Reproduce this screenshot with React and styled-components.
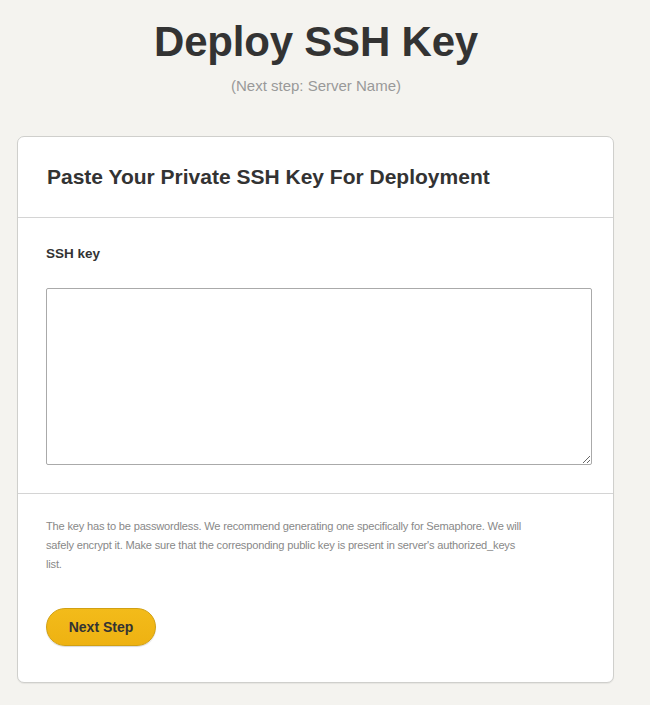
import React from "react";
import styled, { createGlobalStyle } from "styled-components";

const Global = createGlobalStyle`
  html, body { margin: 0; padding: 0; }
  body {
    background: #f4f3ef;
    font-family: "Liberation Sans", Arial, Helvetica, sans-serif;
    color: #333;
  }
`;

const Page = styled.div`
  width: 650px;
  padding: 18px 0 22px;
  box-sizing: border-box;
`;

const Header = styled.header`
  display: flex;
  flex-direction: column;
  align-items: center;
  width: 632px;
`;

const Title = styled.h1`
  margin: 0;
  font-size: 42px;
  line-height: 48px;
  font-weight: 700;
  color: #333;
  letter-spacing: -0.2px;
`;

const Subtitle = styled.p`
  margin: 11px 0 0;
  font-size: 15px;
  line-height: 18px;
  color: #999;
`;

const Card = styled.section`
  margin: 41px 0 0 17px;
  width: 597px;
  box-sizing: border-box;
  background: #fff;
  border: 1px solid #cfcfcc;
  border-radius: 7px;
  box-shadow: 0 1px 1px rgba(0, 0, 0, 0.06);
`;

const CardHead = styled.div`
  padding: 28px 29px 28px;
  border-bottom: 1px solid #d4d4d4;
`;

const CardTitle = styled.h2`
  margin: 0;
  font-size: 21px;
  line-height: 24px;
  font-weight: 700;
  color: #333;
`;

const Section = styled.div`
  padding: ${(p) => p.$pad};
  border-bottom: ${(p) => (p.$divider ? "1px solid #d4d4d4" : "none")};
`;

const Label = styled.label`
  display: block;
  font-size: 13.5px;
  line-height: 16px;
  font-weight: 700;
  color: #333;
  margin-bottom: 26px;
`;

const TextArea = styled.textarea`
  display: block;
  width: 546px;
  height: 177px;
  box-sizing: border-box;
  border: 1px solid #aaa;
  border-radius: 2px;
  margin: 0;
  padding: 4px;
  font-family: "Liberation Mono", monospace;
  font-size: 12px;
  background: #fff;
`;

const Help = styled.p`
  margin: 0;
  font-size: 11.1px;
  letter-spacing: -0.2px;
  line-height: 19px;
  color: #888;
  width: 478px;
`;

const Button = styled.button`
  display: inline-flex;
  align-items: center;
  justify-content: center;
  margin-top: 34px;
  width: 110px;
  height: 38px;
  box-sizing: border-box;
  border: 1px solid #d1a012;
  border-radius: 19px;
  background: linear-gradient(#f3bb1a, #eeb212);
  box-shadow: 0 1px 1px rgba(0, 0, 0, 0.15);
  font-family: "Liberation Sans", Arial, sans-serif;
  font-weight: 700;
  font-size: 14px;
  color: #333;
  cursor: pointer;
  padding: 0;
`;

export default function App() {
  return (
    <>
      <Global />
      <Page>
        <Header>
          <Title>Deploy SSH Key</Title>
          <Subtitle>(Next step: Server Name)</Subtitle>
        </Header>
        <Card>
          <CardHead>
            <CardTitle>Paste Your Private SSH Key For Deployment</CardTitle>
          </CardHead>
          <Section $pad="28px 21px 28px 28px" $divider>
            <Label htmlFor="key">SSH key</Label>
            <TextArea id="key" />
          </Section>
          <Section $pad="23px 28px 36px 28px">
            <Help>
              The key has to be passwordless. We recommend generating one specifically for
              Semaphore. We will safely encrypt it. Make sure that the corresponding public key is
              present in server's authorized_keys list.
            </Help>
            <Button>Next Step</Button>
          </Section>
        </Card>
      </Page>
    </>
  );
}
